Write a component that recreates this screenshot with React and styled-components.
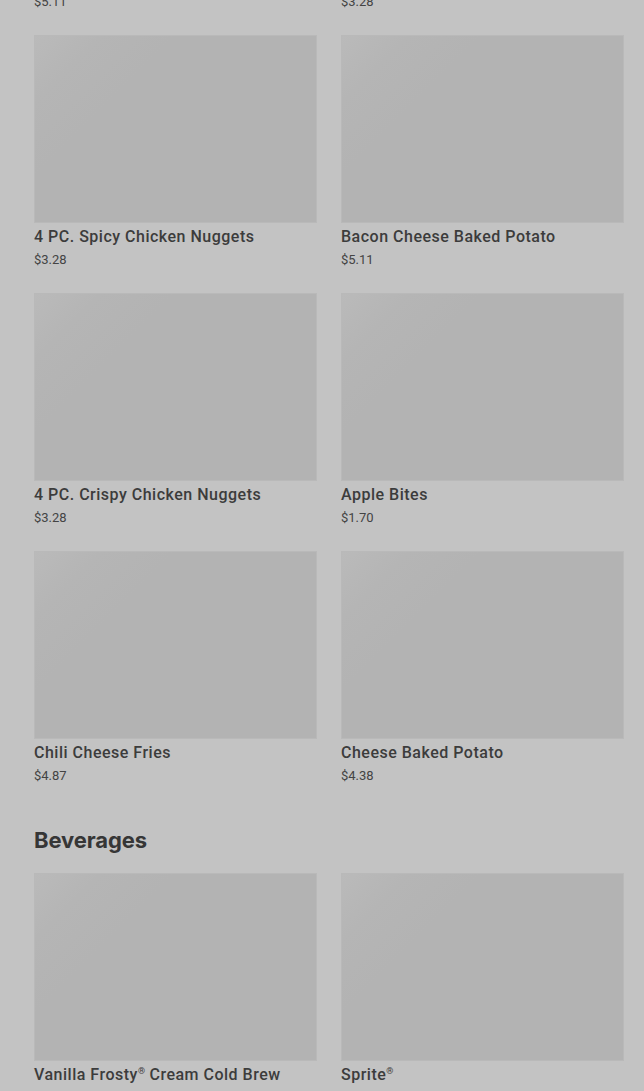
import React from 'react';
import styled, { createGlobalStyle } from 'styled-components';

const GlobalStyle = createGlobalStyle`
  html, body {
    margin: 0;
    padding: 0;
    background: #c3c3c3;
    overflow: hidden;
  }
  body {
    font-family: Roboto, "Liberation Sans", sans-serif;
    color: #3b3b3b;
  }
`;

const Page = styled.main`
  /* the menu is scrolled: the row above is cut off at the top */
  margin-top: -223px;
  padding: 0 20px 0 34px;
`;

const Section = styled.section`
  & + & {
    margin-top: 41px;
  }
`;

const SectionTitle = styled.h2`
  margin: 0 0 19px;
  font-family: Inter, "Liberation Sans", sans-serif;
  font-size: 22px;
  line-height: 28px;
  font-weight: 700;
  letter-spacing: -0.1px;
  color: #363636;
`;

const Grid = styled.div`
  display: grid;
  grid-template-columns: repeat(2, 283px);
  column-gap: 24px;
  row-gap: 24px;
`;

const Card = styled.article`
  display: flex;
  flex-direction: column;
`;

const Thumb = styled.div`
  height: 188px;
  box-sizing: border-box;
  border: 1px solid #b9b9b9;
  background: linear-gradient(135deg, #bababa 0%, #b5b5b5 14%, #b3b3b3 30%, #b3b3b3 100%);
`;

const Name = styled.h3`
  margin: 3px 0 0;
  font-size: 16px;
  line-height: 22px;
  font-weight: 500;
  letter-spacing: 0.5px;
  color: #3c3c3c;
`;

const Mark = styled.sup`
  font-size: 9px;
  line-height: 0;
  vertical-align: 6px;
  letter-spacing: 0;
`;

const Price = styled.span`
  margin-top: 3px;
  font-size: 13px;
  line-height: 18px;
  font-weight: 400;
  color: #444;
`;

const sections = [
  {
    title: 'Sides',
    items: [
      { name: 'Large French Fries', price: 5.11 },
      { name: 'Medium Chili', price: 3.28 },
      { name: '4 PC. Spicy Chicken Nuggets', price: 3.28 },
      { name: 'Bacon Cheese Baked Potato', price: 5.11 },
      { name: '4 PC. Crispy Chicken Nuggets', price: 3.28 },
      { name: 'Apple Bites', price: 1.7 },
      { name: 'Chili Cheese Fries', price: 4.87 },
      { name: 'Cheese Baked Potato', price: 4.38 },
    ],
  },
  {
    title: 'Beverages',
    items: [
      { name: 'Vanilla Frosty® Cream Cold Brew', price: 4.29 },
      { name: 'Sprite®', price: 2.19 },
    ],
  },
];

// render the ® sign as a small raised mark
const renderName = (name) =>
  name.split('®').map((part, i, parts) => (
    <React.Fragment key={i}>
      {part}
      {i < parts.length - 1 && <Mark>®</Mark>}
    </React.Fragment>
  ));

const MenuCard = ({ name, price }) => (
  <Card>
    <Thumb />
    <Name>{renderName(name)}</Name>
    <Price>${price.toFixed(2)}</Price>
  </Card>
);

export default function App() {
  return (
    <>
      <GlobalStyle />
      <Page>
        {sections.map((section, i) => (
          <Section key={section.title}>
            {i > 0 && <SectionTitle>{section.title}</SectionTitle>}
            <Grid>
              {section.items.map((item) => (
                <MenuCard key={item.name} {...item} />
              ))}
            </Grid>
          </Section>
        ))}
      </Page>
    </>
  );
}
